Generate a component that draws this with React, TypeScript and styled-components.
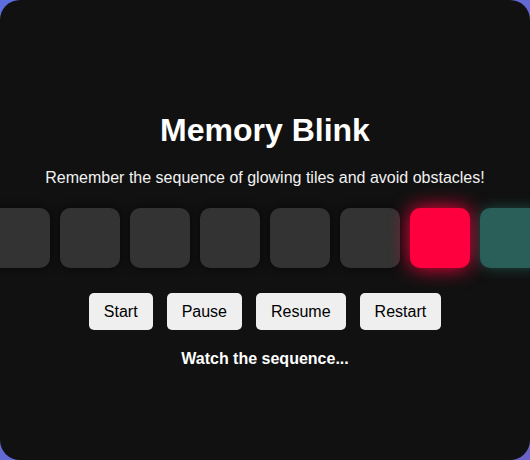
import React from "react";
import styled, { createGlobalStyle, css } from "styled-components";

const GlobalStyle = createGlobalStyle`
  html, body {
    margin: 0;
    padding: 0;
  }
  body {
    background: linear-gradient(135deg, #5d6fe0 0%, #6568d2 60%, #6a62c6 100%);
    font-family: "Liberation Sans", Arial, sans-serif;
    min-height: 460px;
  }
`;

const Card = styled.main`
  box-sizing: border-box;
  width: 530px;
  height: 460px;
  background: #111111;
  border-radius: 20px;
  overflow: hidden;
  display: flex;
  flex-direction: column;
  align-items: center;
  padding-top: 112px;
  color: #ffffff;
`;

const Title = styled.h1`
  margin: 0 0 20px;
  font-size: 32px;
  line-height: 37px;
  font-weight: 700;
`;

const Subtitle = styled.p`
  margin: 0 0 21px;
  font-size: 16px;
  line-height: 18px;
  color: #f2f2f2;
`;

const TileRow = styled.div`
  display: flex;
  justify-content: center;
  gap: 10px;
  width: 100%;
  margin-bottom: 25px;
`;

type TileKind = "idle" | "glow" | "obstacle";

const Tile = styled.div<{ $kind: TileKind }>`
  flex: 0 0 60px;
  width: 60px;
  height: 60px;
  border-radius: 10px;
  background: #333333;
  box-shadow: 0 0 8px rgba(0, 0, 0, 0.6);
  ${(p) =>
    p.$kind === "glow" &&
    css`
      background: #ff003f;
      box-shadow: 0 0 20px #ff003f;
    `}
  ${(p) =>
    p.$kind === "obstacle" &&
    css`
      background: #2a5e58;
      box-shadow: 0 0 14px rgba(40, 120, 108, 0.55);
    `}
`;

const Controls = styled.div`
  display: flex;
  gap: 14px;
  margin-bottom: 20px;
`;

const Button = styled.button`
  font-family: "Liberation Sans", Arial, sans-serif;
  font-size: 16px;
  line-height: 17px;
  padding: 10px 15px;
  border: none;
  border-radius: 5px;
  background: #efefef;
  color: #000000;
  cursor: pointer;
`;

const Status = styled.div`
  font-size: 16px;
  line-height: 18px;
  font-weight: 700;
`;

const tiles: TileKind[] = [
  "idle",
  "idle",
  "idle",
  "idle",
  "idle",
  "idle",
  "glow",
  "obstacle",
];

export default function App() {
  return (
    <>
      <GlobalStyle />
      <Card>
        <Title>Memory Blink</Title>
        <Subtitle>
          Remember the sequence of glowing tiles and avoid obstacles!
        </Subtitle>
        <TileRow>
          {tiles.map((k, i) => (
            <Tile key={i} $kind={k} />
          ))}
        </TileRow>
        <Controls>
          <Button>Start</Button>
          <Button>Pause</Button>
          <Button>Resume</Button>
          <Button>Restart</Button>
        </Controls>
        <Status>Watch the sequence...</Status>
      </Card>
    </>
  );
}
